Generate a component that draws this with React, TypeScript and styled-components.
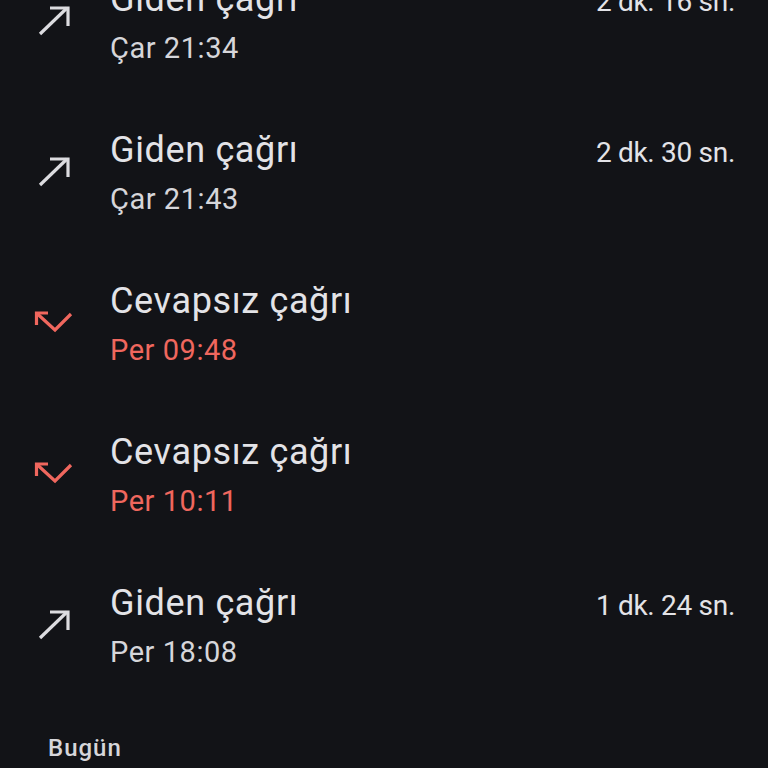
import React from "react";
import styled, { createGlobalStyle } from "styled-components";

const Global = createGlobalStyle`
  html, body { margin: 0; padding: 0; background: #121317; }
  body { font-family: Roboto, "Noto Sans", sans-serif; }
`;

const Screen = styled.div`
  width: 768px;
  height: 768px;
  overflow: hidden;
  background: #121317;
`;

const List = styled.div`
  display: flex;
  flex-direction: column;
  margin-top: -50px;
`;

const Row = styled.div`
  display: flex;
  align-items: flex-start;
  padding: 25px 33px 33px 34px;
`;

const IconBox = styled.div`
  width: 40px;
  height: 40px;
  margin-top: 26px;
  flex: none;
  svg { display: block; }
`;

const Body = styled.div`
  flex: 1;
  margin-left: 36px;
  display: flex;
  flex-direction: column;
`;

const TitleLine = styled.div`
  display: flex;
  align-items: baseline;
  justify-content: space-between;
  height: 48px;
`;

const Title = styled.span`
  font-size: 36px;
  line-height: 48px;
  color: #e3e3e7;
  letter-spacing: 0.65px;
`;

const Duration = styled.span`
  font-size: 28px;
  line-height: 36px;
  color: #e3e3e7;
  letter-spacing: -0.3px;
`;

const Sub = styled.span<{ $missed?: boolean }>`
  margin-top: 5px;
  font-size: 29px;
  line-height: 40px;
  letter-spacing: 0.55px;
  color: ${(p) => (p.$missed ? "#f0675e" : "#d6d6da")};
`;

const Header = styled.div`
  padding: 27px 0 0 48px;
  font-size: 24px;
  line-height: 32px;
  font-weight: 500;
  letter-spacing: 1px;
  color: #d6d6da;
`;

const Outgoing = () => (
  <svg width="40" height="40" viewBox="0 0 40 40" fill="none">
    <path d="M6 33 L33 7" stroke="#dcdce0" strokeWidth="3.2" />
    <path d="M16 7 H34 V25" stroke="#dcdce0" strokeWidth="3.2" />
  </svg>
);

const Missed = () => (
  <svg width="40" height="40" viewBox="0 0 40 40" fill="none">
    <path d="M14 10 H2.5 V22" stroke="#f0675e" strokeWidth="3.2" />
    <path d="M3 10.5 L21 27 L37 11" stroke="#f0675e" strokeWidth="3.2" />
  </svg>
);

type Call = { kind: "out" | "missed"; time: string; duration?: string };

const calls: Call[] = [
  { kind: "out", time: "Çar 21:34", duration: "2 dk. 16 sn." },
  { kind: "out", time: "Çar 21:43", duration: "2 dk. 30 sn." },
  { kind: "missed", time: "Per 09:48" },
  { kind: "missed", time: "Per 10:11" },
  { kind: "out", time: "Per 18:08", duration: "1 dk. 24 sn." },
];

export default function App() {
  return (
    <Screen>
      <Global />
      <List>
        {calls.map((c, i) => (
          <Row key={i}>
            <IconBox>{c.kind === "out" ? <Outgoing /> : <Missed />}</IconBox>
            <Body>
              <TitleLine>
                <Title>{c.kind === "out" ? "Giden çağrı" : "Cevapsız çağrı"}</Title>
                {c.duration && <Duration>{c.duration}</Duration>}
              </TitleLine>
              <Sub $missed={c.kind === "missed"}>{c.time}</Sub>
            </Body>
          </Row>
        ))}
        <Header>Bugün</Header>
      </List>
    </Screen>
  );
}
